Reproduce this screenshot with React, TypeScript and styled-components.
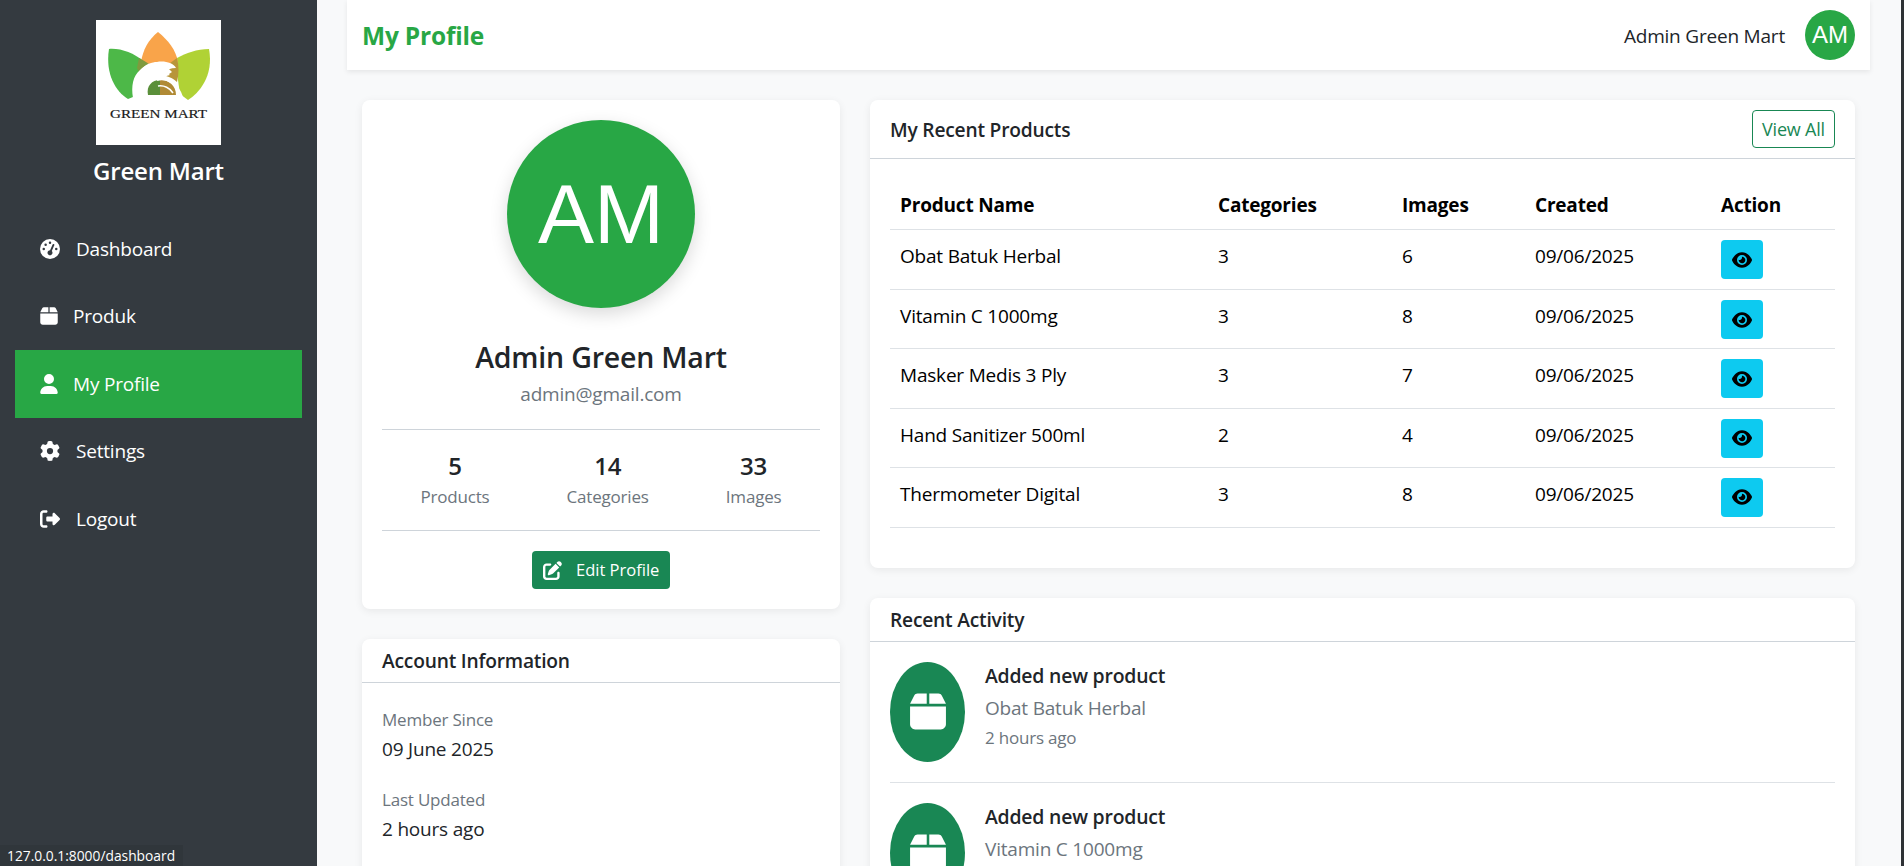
import React from "react";
import styled, { createGlobalStyle } from "styled-components";
import { FaBox, FaEye, FaGaugeHigh, FaGear, FaPenToSquare, FaRightFromBracket, FaUser } from "react-icons/fa6";

const GlobalStyle = createGlobalStyle`
    * {
        box-sizing: border-box;
    }
    html, body {
        margin: 0;
        height: 100%;
        overflow: hidden;
    }
    body {
        font-family: "Open Sans", "Noto Sans", sans-serif;
        font-size: 19px;
        line-height: 30px;
        letter-spacing: -0.2px;
        color: #212529;
        background: #f8f9fa;
    }
`;

const products = [
    { name: "Obat Batuk Herbal", categories: 3, images: 6 },
    { name: "Vitamin C 1000mg", categories: 3, images: 8 },
    { name: "Masker Medis 3 Ply", categories: 3, images: 7 },
    { name: "Hand Sanitizer 500ml", categories: 2, images: 4 },
    { name: "Thermometer Digital", categories: 3, images: 8 },
];

const navItems = [
    { label: "Dashboard", icon: <FaGaugeHigh /> },
    { label: "Produk", icon: <FaBox />, narrow: true },
    { label: "My Profile", icon: <FaUser />, narrow: true, active: true },
    { label: "Settings", icon: <FaGear /> },
    { label: "Logout", icon: <FaRightFromBracket /> },
];

const Logo = () => (
    <LogoBox viewBox="0 0 125 125">
        <rect width="125" height="125" fill="#fff" />
        <path d="M13 29C24 28 38 33 47 41L40 70L37 77L32 79C20 72 9 54 13 29Z" fill="#4db848" />
        <path d="M113 29C101 29 90 33 81 38L82 60L84 74L92 80C103 73 118 56 113 29Z" fill="#b0d235" />
        <path d="M62 12C72 20 80 30 82 42L62 46L45 42C47 30 52 20 62 12Z" fill="#f9a44a" />
        <path d="M43 38C47 40 50 42 53 44C48 46 45 49 43 52L41 48Z" fill="#7f9a3e" />
        <path d="M81 38C83 46 83 54 81 62C78 59 74 57 70 56L76 52L70 46Z" fill="#b8953a" />
        <path d="M37 78C35 66 37 56 44 50C50 44 56 42 61 42C66 41 71 42 74 43C77 44 79 46 80 48C75 48 70 50 67 52C70 52 72 53 74 55C70 56 67 57 64 58C58 59 53 62 52 67C51 70 51 73 51 78Z" fill="#fff" />
        <path d="M52 75C50 66 56 60 64 60V75Z" fill="#5a8f3a" />
        <path d="M64 59C73 60 80 66 80 75H64Z" fill="#b08a35" />
        <path d="M61 60C71 57 82 64 86 77" stroke="#fff" strokeWidth="2" fill="none" />
        <path d="M62 66C68 65 74 68 77 73" stroke="#fff" strokeWidth="1.5" fill="none" />
        <LogoText x="14" y="98" textLength="97" lengthAdjust="spacingAndGlyphs">GREEN MART</LogoText>
    </LogoBox>
);

const App: React.FC = () => {
    return (
        <Layout>
            <GlobalStyle />
            <Sidebar>
                <Brand>
                    <Logo />
                    <BrandName>Green Mart</BrandName>
                </Brand>
                <Nav>
                    {navItems.map(item => (
                        <NavItem key={item.label} $active={item.active} $narrow={item.narrow}>
                            {item.icon}
                            {item.label}
                        </NavItem>
                    ))}
                </Nav>
                <StatusLink>127.0.0.1:8000/dashboard</StatusLink>
            </Sidebar>
            <Main>
                <TopBar>
                    <PageTitle>My Profile</PageTitle>
                    <UserBox>
                        <UserName>Admin Green Mart</UserName>
                        <SmallAvatar>AM</SmallAvatar>
                    </UserBox>
                </TopBar>
                <Columns>
                    <Column>
                        <ProfileCard>
                            <BigAvatar>AM</BigAvatar>
                            <ProfileName>Admin Green Mart</ProfileName>
                            <Email>admin@gmail.com</Email>
                            <Stats>
                                <Stat><StatValue>5</StatValue><StatLabel>Products</StatLabel></Stat>
                                <Stat><StatValue>14</StatValue><StatLabel>Categories</StatLabel></Stat>
                                <Stat><StatValue>33</StatValue><StatLabel>Images</StatLabel></Stat>
                            </Stats>
                            <EditButton><FaPenToSquare />Edit Profile</EditButton>
                        </ProfileCard>
                        <Card>
                            <CardHeader><CardTitle>Account Information</CardTitle></CardHeader>
                            <InfoBody>
                                <InfoRow>
                                    <InfoLabel>Member Since</InfoLabel>
                                    <InfoValue>09 June 2025</InfoValue>
                                </InfoRow>
                                <InfoRow>
                                    <InfoLabel>Last Updated</InfoLabel>
                                    <InfoValue>2 hours ago</InfoValue>
                                </InfoRow>
                            </InfoBody>
                        </Card>
                    </Column>
                    <Column>
                        <Card>
                            <ProductsHeader>
                                <ProductsTitle>My Recent Products</ProductsTitle>
                                <ViewAll>View All</ViewAll>
                            </ProductsHeader>
                            <TableWrap>
                                <Table>
                                    <colgroup>
                                        <col width="318" />
                                        <col width="184" />
                                        <col width="133" />
                                        <col width="186" />
                                        <col width="124" />
                                    </colgroup>
                                    <thead>
                                        <tr>
                                            <Th>Product Name</Th>
                                            <Th>Categories</Th>
                                            <Th>Images</Th>
                                            <Th>Created</Th>
                                            <Th>Action</Th>
                                        </tr>
                                    </thead>
                                    <tbody>
                                        {products.map(p => (
                                            <Row key={p.name}>
                                                <Td>{p.name}</Td>
                                                <Td>{p.categories}</Td>
                                                <Td>{p.images}</Td>
                                                <Td>09/06/2025</Td>
                                                <Td><EyeButton><FaEye /></EyeButton></Td>
                                            </Row>
                                        ))}
                                    </tbody>
                                </Table>
                            </TableWrap>
                        </Card>
                        <Card>
                            <CardHeader><CardTitle>Recent Activity</CardTitle></CardHeader>
                            <ActivityList>
                                {products.slice(0, 2).map(p => (
                                    <ActivityItem key={p.name}>
                                        <ActivityIcon><FaBox /></ActivityIcon>
                                        <div>
                                            <ActivityTitle>Added new product</ActivityTitle>
                                            <ActivityName>{p.name}</ActivityName>
                                            <ActivityTime>2 hours ago</ActivityTime>
                                        </div>
                                    </ActivityItem>
                                ))}
                            </ActivityList>
                        </Card>
                    </Column>
                </Columns>
            </Main>
        </Layout>
    );
};

export default App;

const Layout = styled.div`
    display: flex;
    height: 866px;
    overflow: hidden;
    border-right: 3px solid #2e3235;
`;

const Sidebar = styled.aside`
    position: relative;
    flex: 0 0 317px;
    background: #343a40;
    color: #fff;
    padding: 20px 15px 0;
`;

const Brand = styled.div`
    display: flex;
    flex-direction: column;
    align-items: center;
    margin-bottom: 26px;
`;

const LogoBox = styled.svg`
    display: block;
    width: 125px;
    height: 125px;
`;

const LogoText = styled.text`
    font-family: "Liberation Serif", serif;
    font-size: 13.5px;
    letter-spacing: 0;
    fill: #1a1a1a;
    stroke: #1a1a1a;
    stroke-width: 0.2px;
`;

const BrandName = styled.div`
    margin-top: 8px;
    font-size: 24px;
    line-height: 36px;
    font-weight: 600;
`;

const Nav = styled.nav`
    display: flex;
    flex-direction: column;
`;

const NavItem = styled.a<{ $active?: boolean; $narrow?: boolean }>`
    display: flex;
    align-items: center;
    gap: ${props => (props.$narrow ? "15px" : "16px")};
    height: 67.5px;
    padding-left: 25px;
    color: #fff;
    background: ${props => (props.$active ? "#28a745" : "transparent")};
    svg {
        flex: none;
        width: ${props => (props.$narrow ? "18px" : "20px")};
        height: 20px;
    }
`;

const StatusLink = styled.div`
    position: absolute;
    left: 0;
    bottom: 0;
    padding: 0 8px 0 7px;
    height: 21px;
    font-size: 13.8px;
    line-height: 21px;
    background: #30363b;
    letter-spacing: 0;
    white-space: nowrap;
`;

const Main = styled.main`
    flex: 1;
    min-width: 0;
    padding: 0 31px 0 30px;
`;

const TopBar = styled.header`
    display: flex;
    align-items: center;
    justify-content: space-between;
    height: 70px;
    padding: 0 15px;
    background: #fff;
    box-shadow: 0 2px 5px rgba(0, 0, 0, 0.08);
`;

const PageTitle = styled.h1`
    margin: 0;
    padding-top: 2px;
    font-size: 24.5px;
    font-weight: 700;
    color: #28a745;
`;

const UserBox = styled.div`
    display: flex;
    align-items: center;
    gap: 20px;
`;

const UserName = styled.span`
    padding-top: 2px;
`;

const SmallAvatar = styled.div`
    display: flex;
    align-items: center;
    justify-content: center;
    width: 50px;
    height: 50px;
    border-radius: 50%;
    background: #28a745;
    color: #fff;
    font-family: "Liberation Sans", sans-serif;
    font-size: 24px;
    letter-spacing: 0;
`;

const Columns = styled.div`
    display: grid;
    grid-template-columns: 478px 985px;
    gap: 30px;
    margin-top: 30px;
    margin-left: 15px;
`;

const Column = styled.div`
    display: flex;
    flex-direction: column;
    gap: 30px;
`;

const Card = styled.section`
    background: #fff;
    border-radius: 8px;
    box-shadow: 0 2px 8px rgba(0, 0, 0, 0.07);
`;

const ProfileCard = styled(Card)`
    display: flex;
    flex-direction: column;
    align-items: center;
    padding: 20px;
`;

const BigAvatar = styled.div`
    display: flex;
    align-items: center;
    justify-content: center;
    width: 188px;
    height: 188px;
    border-radius: 50%;
    background: #28a745;
    color: #fff;
    font-family: "Liberation Sans", sans-serif;
    font-size: 84px;
    letter-spacing: 0;
    box-shadow: 0 6px 18px rgba(0, 0, 0, 0.15);
`;

const ProfileName = styled.h3`
    margin: 30px 0 0;
    font-size: 28.5px;
    line-height: 38px;
    font-weight: 600;
`;

const Email = styled.div`
    margin-top: 3px;
    color: #6c757d;
`;

const Stats = styled.div`
    display: flex;
    justify-content: space-around;
    align-self: stretch;
    margin-top: 20px;
    padding: 18px 0 20px;
    border-top: 1px solid #ced4da;
    border-bottom: 1px solid #ced4da;
`;

const Stat = styled.div`
    text-align: center;
`;

const StatValue = styled.div`
    font-size: 24px;
    line-height: 36px;
    font-weight: 600;
`;

const StatLabel = styled.div`
    font-size: 17px;
    line-height: 26px;
    color: #6c757d;
`;

const EditButton = styled.button`
    display: flex;
    align-items: center;
    gap: 14px;
    width: 138px;
    height: 38px;
    margin-top: 20px;
    padding: 0 11px;
    border: 0;
    border-radius: 4px;
    background: #198754;
    color: #fff;
    font: inherit;
    font-size: 16.5px;
    white-space: nowrap;
    svg {
        flex: none;
        width: 19px;
        height: 19px;
    }
`;

const CardHeader = styled.div`
    padding: 7px 20px;
    height: 44px;
    border-bottom: 1px solid #ced4da;
`;

const ProductsHeader = styled(CardHeader)`
    display: flex;
    align-items: center;
    justify-content: space-between;
    height: 59px;
`;

const CardTitle = styled.h5`
    margin: 0;
    font-size: 19.2px;
    line-height: 30px;
    font-weight: 600;
`;

const ProductsTitle = styled(CardTitle)`
    padding-top: 2px;
`;

const ViewAll = styled.a`
    display: flex;
    align-items: center;
    justify-content: center;
    width: 83px;
    height: 38px;
    border: 1px solid #198754;
    border-radius: 4px;
    color: #198754;
    font-size: 18px;
`;

const InfoBody = styled.div`
    padding: 22px 20px 20px;
`;

const InfoRow = styled.div`
    margin-bottom: 21px;
`;

const InfoLabel = styled.div`
    font-size: 17px;
    line-height: 29px;
    color: #6c757d;
`;

const InfoValue = styled.div`
    line-height: 30px;
`;

const TableWrap = styled.div`
    padding: 20px 20px 40px;
`;

const Table = styled.table`
    width: 945px;
    table-layout: fixed;
    border-collapse: collapse;
    color: #000;
`;

const Th = styled.th`
    height: 50px;
    padding: 11px 10px 9px;
    text-align: left;
    font-weight: 700;
    border-bottom: 1px solid #dee2e6;
`;

const Td = styled.td`
    padding: 10px 10px 9.25px;
    line-height: 32px;
    vertical-align: top;
    border-bottom: 1px solid #dee2e6;
`;

const Row = styled.tr`
    &:first-child td,
    &:last-child td {
        padding-bottom: 10px;
    }
`;

const EyeButton = styled.button`
    display: flex;
    align-items: center;
    justify-content: center;
    width: 42px;
    height: 39px;
    border: 0;
    border-radius: 4px;
    background: #0dcaf0;
    color: #000;
    svg {
        width: 20px;
        height: 20px;
    }
`;

const ActivityList = styled.div`
    padding: 20px 20px 0;
`;

const ActivityItem = styled.div`
    display: flex;
    gap: 20px;
    height: 121px;
    padding-bottom: 20px;
    margin-bottom: 20px;
    border-bottom: 1px solid #dee2e6;
`;

const ActivityIcon = styled.div`
    display: flex;
    align-items: center;
    justify-content: center;
    flex: 0 0 75px;
    height: 100px;
    border-radius: 50%;
    background: #198754;
    color: #fff;
    svg {
        width: 36px;
        height: 41px;
    }
`;

const ActivityTitle = styled.div`
    font-size: 19.4px;
    font-weight: 600;
    line-height: 28px;
`;

const ActivityName = styled.div`
    margin-top: 3px;
    color: #6c757d;
`;

const ActivityTime = styled.div`
    font-size: 17px;
    color: #6c757d;
`;
